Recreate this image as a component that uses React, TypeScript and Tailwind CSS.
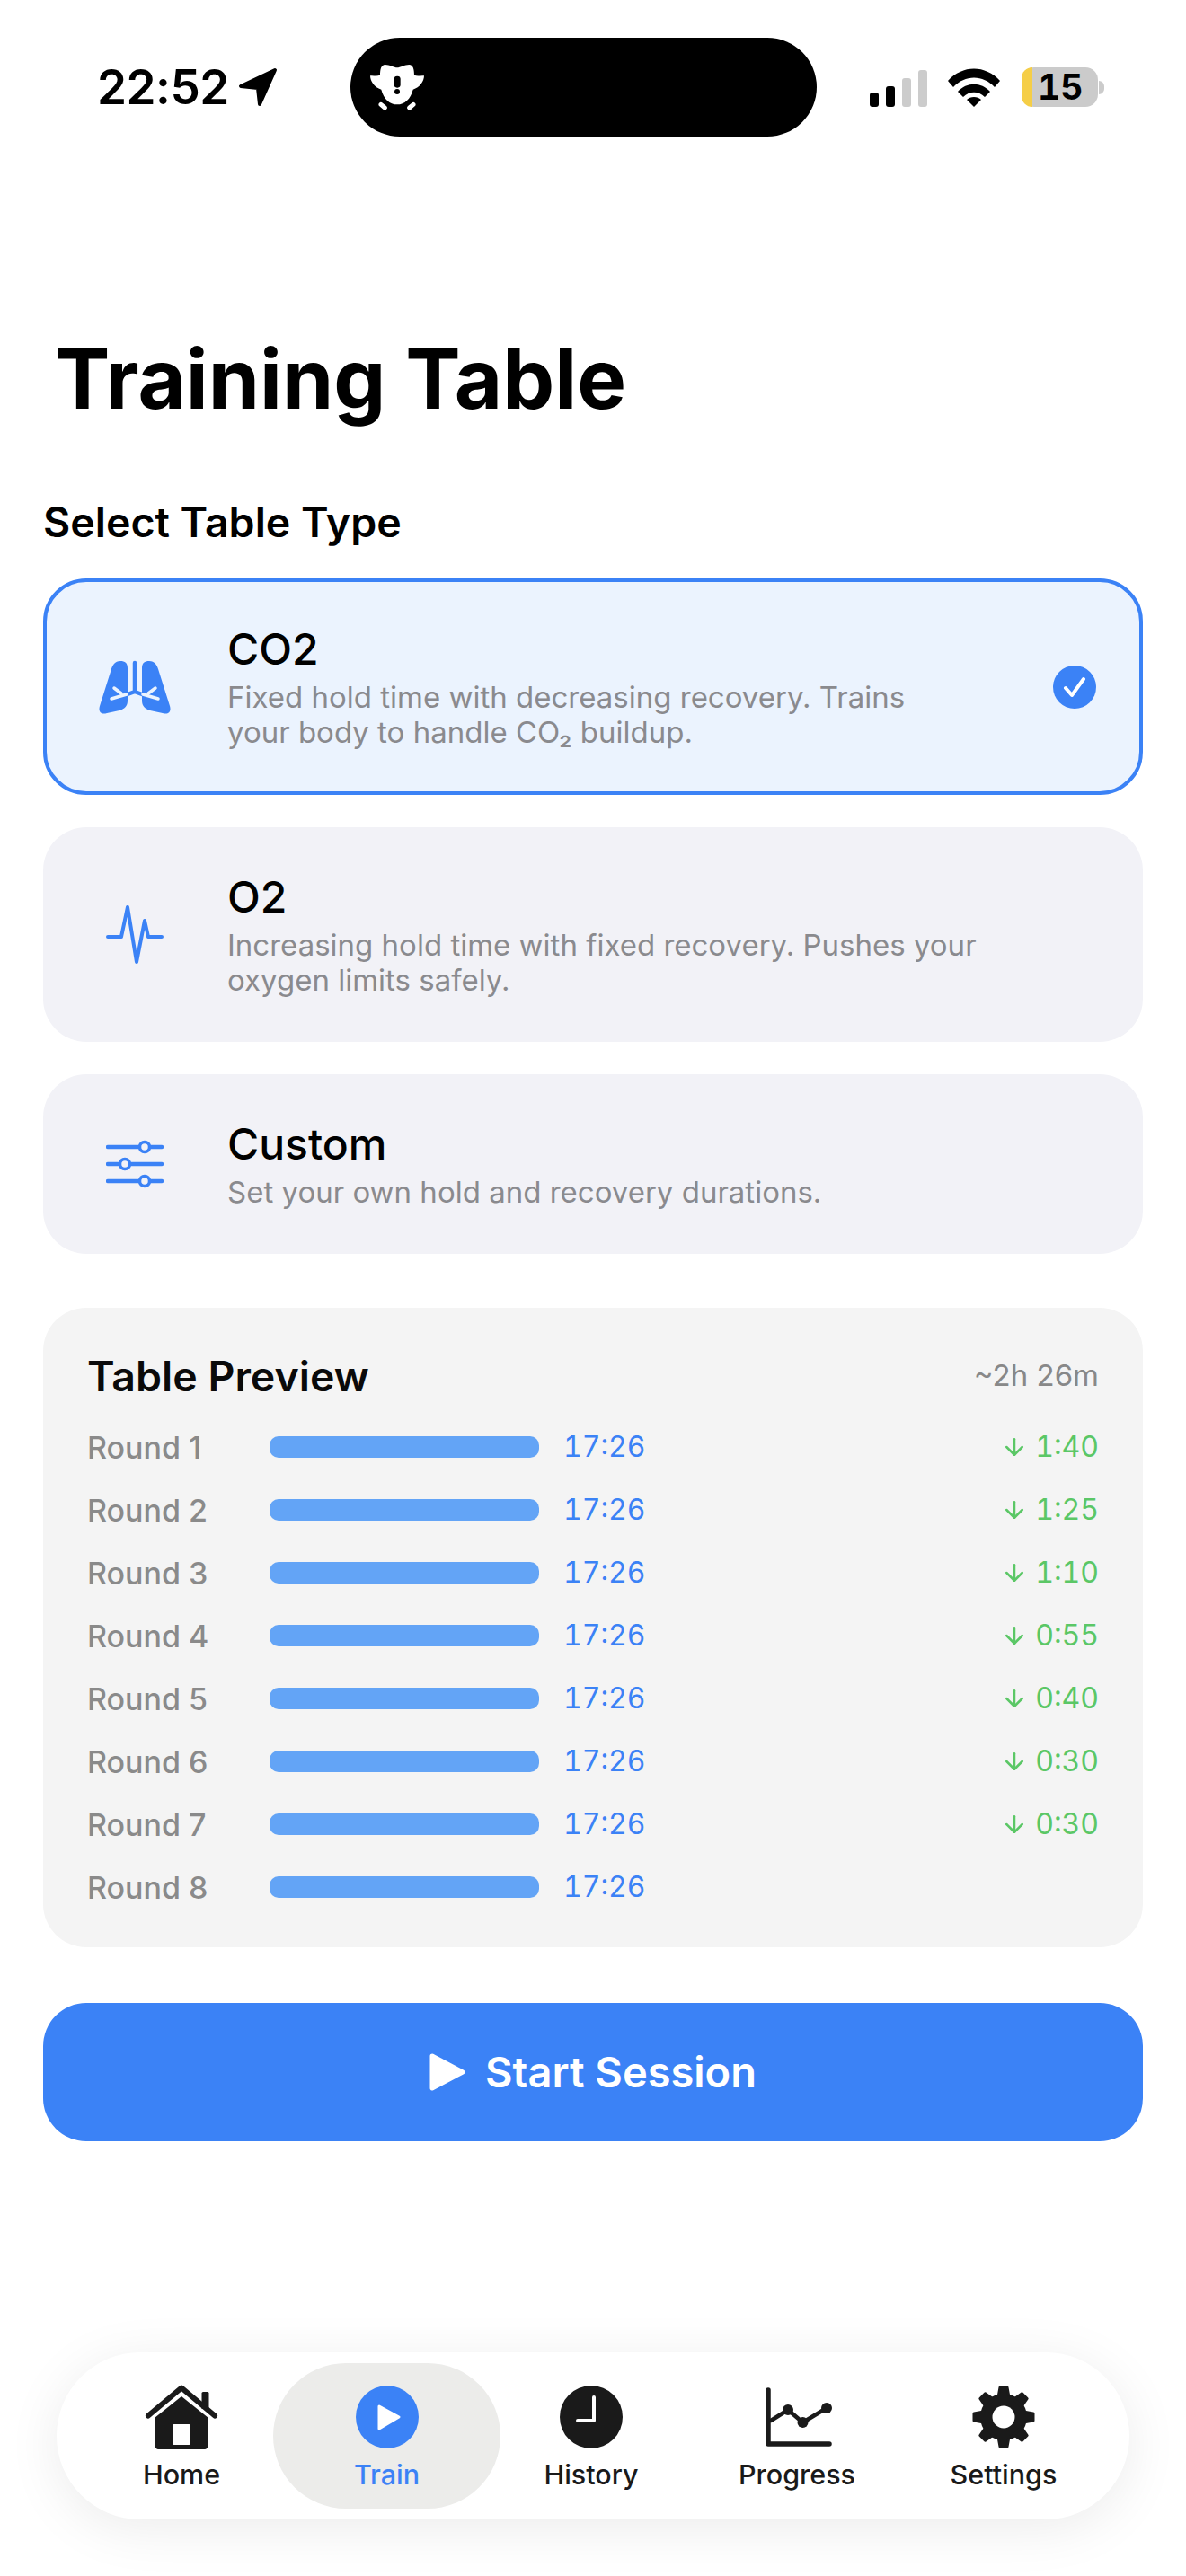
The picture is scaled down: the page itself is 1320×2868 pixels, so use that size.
import React from 'react';
import { ArrowDown } from 'lucide-react';

const rounds = [
  { name: 'Round 1', hold: '17:26', rest: '1:40' },
  { name: 'Round 2', hold: '17:26', rest: '1:25' },
  { name: 'Round 3', hold: '17:26', rest: '1:10' },
  { name: 'Round 4', hold: '17:26', rest: '0:55' },
  { name: 'Round 5', hold: '17:26', rest: '0:40' },
  { name: 'Round 6', hold: '17:26', rest: '0:30' },
  { name: 'Round 7', hold: '17:26', rest: '0:30' },
  { name: 'Round 8', hold: '17:26', rest: '' },
];

const LungsIcon = () => (
  <svg width="84" height="62" viewBox="0 0 84 62">
    <path d="M34 10C34 4 31 2 26 2C20 2 17 6 15 14L3 52C1 59 5 62 11 60L25 57C31 55 34 52 34 46Z" fill="#3b82f6" />
    <path d="M50 10C50 4 53 2 58 2C64 2 67 6 69 14L81 52C83 59 79 62 73 60L59 57C53 55 50 52 50 46Z" fill="#3b82f6" />
    <g fill="none" stroke="#3b82f6" strokeWidth="4.5" strokeLinecap="round" strokeLinejoin="round">
      <path d="M42 4V36M34 39L42 36L50 39" />
    </g>
    <g fill="none" stroke="#ebf3fe" strokeWidth="3.5" strokeLinecap="round" strokeLinejoin="round">
      <path d="M33 39L16 44M27 38L19 32" />
      <path d="M51 39L68 44M57 38L65 32" />
    </g>
  </svg>
);

const PulseIcon = () => (
  <svg width="64" height="66" viewBox="0 0 64 66" fill="none" stroke="#3b82f6" strokeWidth="4" strokeLinecap="round" strokeLinejoin="round">
    <path d="M2 35H17L24 2L34 63L43 17L47 35H62" />
  </svg>
);

const SlidersIcon = () => (
  <svg width="64" height="54" viewBox="0 0 64 54" fill="none" stroke="#3b82f6" strokeWidth="4.5" strokeLinecap="round">
    <path d="M2 8H62M2 27H62M2 46H62" />
    <circle cx="43" cy="8" r="5.5" fill="#f2f2f7" strokeWidth="3.5" />
    <circle cx="21" cy="27" r="5.5" fill="#f2f2f7" strokeWidth="3.5" />
    <circle cx="43" cy="46" r="5.5" fill="#f2f2f7" strokeWidth="3.5" />
  </svg>
);

const HomeIcon = () => (
  <svg width="84" height="72" viewBox="0 0 84 72">
    <path d="M64.5 9.5C64.5 8.5 65.5 8 66.5 8H70.5C71.5 8 72.5 8.5 72.5 9.5V27H64.5Z" fill="#1a1a1a" />
    <path d="M5 34.5L42 3.5L79 34.5" fill="none" stroke="#1a1a1a" strokeWidth="6" strokeLinecap="round" strokeLinejoin="round" />
    <path d="M42 13L72 37V67C72 70 70 72 67 72H17C14 72 12 70 12 67V37Z" fill="#1a1a1a" />
    <rect x="32.5" y="44" width="19" height="23" rx="1" fill="#ffffff" />
  </svg>
);

const PlayCircleIcon = () => (
  <svg width="72" height="72" viewBox="0 0 72 72">
    <circle cx="36" cy="36" r="35" fill="#3b82f6" />
    <path d="M27 24L49 36L27 49Z" fill="#ffffff" stroke="#ffffff" strokeWidth="3" strokeLinejoin="round" />
  </svg>
);

const ClockIcon = () => (
  <svg width="72" height="72" viewBox="0 0 72 72">
    <circle cx="36" cy="36" r="35" fill="#1a1a1a" />
    <path d="M39 14V40H21" fill="none" stroke="#ffffff" strokeWidth="4" strokeLinecap="round" strokeLinejoin="round" />
  </svg>
);

const ChartIcon = () => (
  <svg width="84" height="72" viewBox="0 0 84 72" fill="none" stroke="#1a1a1a" strokeLinecap="round" strokeLinejoin="round">
    <path d="M10 6V66H78" strokeWidth="5.5" />
    <path d="M13 40L32 28L48.5 42L75 26" strokeWidth="4.5" />
    <circle cx="32" cy="28" r="6" fill="#1a1a1a" stroke="none" />
    <circle cx="48.5" cy="42" r="6" fill="#1a1a1a" stroke="none" />
    <circle cx="75" cy="26" r="6" fill="#1a1a1a" stroke="none" />
  </svg>
);

const GearIcon = () => (
  <svg width="72" height="72" viewBox="0 0 72 72">
    <circle cx="36" cy="36" r="26" fill="#1a1a1a" />
    {[0, 45, 90, 135, 180, 225, 270, 315].map(deg => (
      <path key={deg} d="M30 14L32 3H40L42 14Z" fill="#1a1a1a" stroke="#1a1a1a" strokeWidth="3" strokeLinejoin="round" transform={`rotate(${deg} 36 36)`} />
    ))}
    <circle cx="36" cy="36" r="12.5" fill="#ffffff" />
  </svg>
);

const IslandIcon = () => (
  <svg width="60" height="50" viewBox="155 155 180 150">
    <path d="M205 155C220 155 235 165 245 165C255 165 270 155 285 155C298 155 302 170 302 190C315 195 325 190 335 192C335 210 320 232 298 238C290 270 270 288 245 288C220 288 200 270 192 238C170 232 155 210 155 192C165 190 175 195 188 190C188 170 192 155 205 155Z" fill="#ffffff" />
    <rect x="235" y="193" width="21" height="39" rx="10" fill="#000000" />
    <circle cx="245" cy="245" r="9" fill="#000000" />
    <path d="M191 288L204 299M299 288L286 299" stroke="#ffffff" strokeWidth="15" strokeLinecap="round" />
  </svg>
);

const StatusBar = () => (
  <div className="flex h-[195px] items-start pt-[42px] pl-[108px]">
    <div className="flex h-[110px] w-[282px] items-center">
      <span className="text-[53px] leading-none font-semibold tracking-[-0.5px] text-black">22:52</span>
      <svg className="ml-[10px]" width="44" height="44" viewBox="0 0 44 44">
        <path d="M41 3L3 21L22 23L24 41Z" fill="#000000" stroke="#000000" strokeWidth="4" strokeLinejoin="round" />
      </svg>
    </div>
    <div className="flex h-[110px] w-[519px] items-center rounded-[55px] bg-black pl-[22px]">
      <IslandIcon />
    </div>
    <div className="ml-[59px] flex h-[110px] items-center">
      <div className="flex h-[44px] items-end gap-[8px]">
        <div className="h-[16px] w-[10px] rounded-[3px] bg-black" />
        <div className="h-[23px] w-[10px] rounded-[3px] bg-black" />
        <div className="h-[32px] w-[10px] rounded-[3px] bg-[#cccccc]" />
        <div className="h-[41px] w-[10px] rounded-[3px] bg-[#cccccc]" />
      </div>
      <svg className="ml-[23px]" width="58" height="43" viewBox="0 0 58 43">
        <path d="M0 14C16 -4 42 -4 58 14L52 21C39 7 19 7 6 21Z" fill="#000000" />
        <path d="M11 26C21 15 37 15 47 26L41 32C34 25 24 25 17 32Z" fill="#000000" />
        <path d="M21 35C25 31 33 31 37 35L29 43Z" fill="#000000" />
      </svg>
      <div className="ml-[24px] flex h-[44px] w-[85px] rounded-[14px] bg-[#cbcbcb]">
        <div className="h-full w-[12px] rounded-l-[14px] bg-[#f5ce47]" />
        <span className="ml-[6px] text-[39px] leading-[44px] font-bold text-black tabular-nums">15</span>
      </div>
      <div className="ml-[1px] h-[15px] w-[6px] rounded-r-[6px] bg-[#cbcbcb]" />
    </div>
  </div>
);

const TypeCard: React.FC<{ icon: React.ReactNode; title: string; selected?: boolean; className: string; children: React.ReactNode }> = ({ icon, title, selected, className, children }) => (
  <div className={`flex items-center rounded-[48px] border-[4px] pr-[48px] pl-[44px] ${selected ? 'border-[#3b82f6] bg-[#ebf3fe]' : 'border-transparent bg-[#f2f2f7]'} ${className}`}>
    <div className="flex w-[108px] shrink-0 items-center justify-center">{icon}</div>
    <div className="ml-[49px] flex-1">
      <div className="mb-[6px] text-[48px] leading-[56px] font-medium text-black">{title}</div>
      <div className={`text-[33px] leading-[39px] text-[#8a8a8e] ${selected ? 'w-[800px]' : 'w-[870px]'}`}>{children}</div>
    </div>
    {selected && (
      <div className="flex h-[48px] w-[48px] items-center justify-center rounded-full bg-[#3b82f6]">
        <svg width="26" height="24" viewBox="0 0 26 24" fill="none" stroke="#ffffff" strokeWidth="4" strokeLinecap="round" strokeLinejoin="round">
          <path d="M3 13L10 21L23 3" />
        </svg>
      </div>
    )}
  </div>
);

const NavItem: React.FC<{ icon: React.ReactNode; label: string; active?: boolean; className: string }> = ({ icon, label, active, className }) => (
  <div className={`flex flex-col items-center rounded-[81px] pt-[24px] ${active ? 'bg-[#ececea]' : ''} ${className}`}>
    <div className="flex h-[72px] items-center justify-center">{icon}</div>
    <span className={`mt-[8px] text-[30.5px] leading-[40px] font-medium ${active ? 'text-[#3b82f6]' : 'text-[#1a1a1a]'}`}>{label}</span>
  </div>
);

export default function App() {
  return (
    <div className="flex min-h-[2868px] w-[1320px] flex-col bg-white font-['Inter',sans-serif]">
      <StatusBar />
      <div className="flex flex-1 flex-col px-[48px]">
        <h1 className="mt-[170px] ml-[13px] text-[92px] leading-[114px] font-bold text-black">Training Table</h1>
        <h2 className="mt-[74px] text-[46.5px] leading-[56px] font-semibold text-black">Select Table Type</h2>

        <div className="mt-[35px] flex flex-col gap-[36px]">
          <TypeCard selected className="h-[241px]" title="CO2" icon={<LungsIcon />}>
            Fixed hold time with decreasing recovery. Trains your body to handle CO₂ buildup.
          </TypeCard>
          <TypeCard className="h-[239px]" title="O2" icon={<PulseIcon />}>
            Increasing hold time with fixed recovery. Pushes your oxygen limits safely.
          </TypeCard>
          <TypeCard className="h-[200px]" title="Custom" icon={<SlidersIcon />}>
            Set your own hold and recovery durations.
          </TypeCard>
        </div>

        <div className="mt-[60px] h-[712px] rounded-[48px] bg-[#f4f4f4] px-[49px] pt-[48px]">
          <div className="flex items-center justify-between">
            <span className="text-[46.5px] leading-[56px] font-semibold text-[#0a0a0a]">Table Preview</span>
            <span className="text-[33px] text-[#888888]">~2h 26m</span>
          </div>
          <div className="mt-[16px] flex flex-col">
            {rounds.map(r => (
              <div key={r.name} className="flex h-[70px] items-center">
                <span className="w-[203px] text-[34px] font-medium text-[#8a8a8a]">{r.name}</span>
                <div className="h-[24px] w-[300px] rounded-[10px] bg-[#63a4f6]" />
                <span className="ml-[27px] text-[32px] text-[#3b82f6] tabular-nums">{r.hold}</span>
                {r.rest && (
                  <span className="ml-auto flex items-center gap-[8px] text-[32px] text-[#5bc766] tabular-nums">
                    <ArrowDown size={30} strokeWidth={2} />
                    {r.rest}
                  </span>
                )}
              </div>
            ))}
          </div>
        </div>

        <button className="mt-[62px] flex h-[154px] items-center justify-center rounded-[48px] bg-[#3b82f6] text-[47px] font-semibold text-white">
          <svg width="40" height="44" viewBox="0 0 40 44">
            <path d="M3 4L37 22L3 40Z" fill="#ffffff" stroke="#ffffff" strokeWidth="5" strokeLinejoin="round" />
          </svg>
          <span className="ml-[22px]">Start Session</span>
        </button>

        <nav className="mx-[15px] mt-auto mb-[63px] flex h-[186px] rounded-[93px] bg-white py-[12px] pr-[38px] pl-[37px] shadow-[0_10px_60px_rgba(0,0,0,0.08)]">
          <NavItem className="w-[204px]" label="Home" icon={<HomeIcon />} />
          <NavItem className="w-[253px]" label="Train" active icon={<PlayCircleIcon />} />
          <NavItem className="w-[202px]" label="History" icon={<ClockIcon />} />
          <NavItem className="w-[256px]" label="Progress" icon={<ChartIcon />} />
          <NavItem className="w-[204px]" label="Settings" icon={<GearIcon />} />
        </nav>
      </div>
    </div>
  );
}
